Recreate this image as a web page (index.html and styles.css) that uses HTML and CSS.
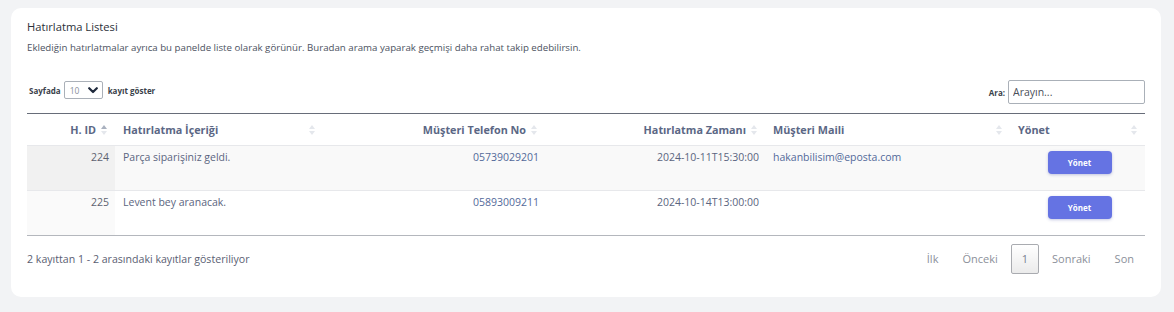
FILE: index.html
```html
<!DOCTYPE html>
<html lang="tr">
<head>
<meta charset="utf-8">
<link rel="stylesheet" href="styles.css">
</head>
<body>
<div class="page">
  <div class="card">
    <h1 class="title">Hatırlatma Listesi</h1>
    <p class="desc">Eklediğin hatırlatmalar ayrıca bu panelde liste olarak görünür. Buradan arama yaparak geçmişi daha rahat takip edebilirsin.</p>
    <div class="controls">
      <div class="length">
        <span class="lbl">Sayfada</span>
        <span class="select"><span class="sel-val">10</span><svg class="chev" width="10" height="7" viewBox="0 0 10 7"><path d="M1.2 1.2 L5 5 L8.8 1.2" fill="none" stroke="#1f2a3d" stroke-width="2.2" stroke-linecap="round" stroke-linejoin="round"/></svg></span>
        <span class="lbl">kayıt göster</span>
      </div>
      <div class="search">
        <span class="lbl">Ara:</span>
        <input class="search-in" type="text" placeholder="Arayın...">
      </div>
    </div>
    <table class="tbl">
      <colgroup>
        <col class="c1"><col class="c2"><col class="c3"><col class="c4"><col class="c5"><col class="c6">
      </colgroup>
      <thead>
        <tr>
          <th><div class="th-in right"><span>H. ID</span><svg class="sort" width="6" height="10" viewBox="0 0 6 10"><path d="M3 0 L6 4 L0 4 Z" fill="#a9b1bf"/><path d="M3 10 L6 6 L0 6 Z" fill="#e4e7ec"/></svg></div></th>
          <th><div class="th-in spread"><span>Hatırlatma İçeriği</span><svg class="sort" width="6" height="10" viewBox="0 0 6 10"><path d="M3 0 L6 4 L0 4 Z" fill="#e4e7ec"/><path d="M3 10 L6 6 L0 6 Z" fill="#e4e7ec"/></svg></div></th>
          <th><div class="th-in right"><span>Müşteri Telefon No</span><svg class="sort" width="6" height="10" viewBox="0 0 6 10"><path d="M3 0 L6 4 L0 4 Z" fill="#e4e7ec"/><path d="M3 10 L6 6 L0 6 Z" fill="#e4e7ec"/></svg></div></th>
          <th><div class="th-in right"><span>Hatırlatma Zamanı</span><svg class="sort" width="6" height="10" viewBox="0 0 6 10"><path d="M3 0 L6 4 L0 4 Z" fill="#e4e7ec"/><path d="M3 10 L6 6 L0 6 Z" fill="#e4e7ec"/></svg></div></th>
          <th><div class="th-in spread"><span>Müşteri Maili</span><svg class="sort" width="6" height="10" viewBox="0 0 6 10"><path d="M3 0 L6 4 L0 4 Z" fill="#e4e7ec"/><path d="M3 10 L6 6 L0 6 Z" fill="#e4e7ec"/></svg></div></th>
          <th><div class="th-in spread"><span>Yönet</span><svg class="sort" width="6" height="10" viewBox="0 0 6 10"><path d="M3 0 L6 4 L0 4 Z" fill="#e4e7ec"/><path d="M3 10 L6 6 L0 6 Z" fill="#e4e7ec"/></svg></div></th>
        </tr>
      </thead>
      <tbody>
        <tr class="odd">
          <td class="id sorted">224</td>
          <td class="txt">Parça siparişiniz geldi.</td>
          <td class="num link">05739029201</td>
          <td class="num">2024-10-11T15:30:00</td>
          <td class="txt link">hakanbilisim@eposta.com</td>
          <td class="act"><button class="btn">Yönet</button></td>
        </tr>
        <tr class="even">
          <td class="id sorted">225</td>
          <td class="txt">Levent bey aranacak.</td>
          <td class="num link">05893009211</td>
          <td class="num">2024-10-14T13:00:00</td>
          <td class="txt link"></td>
          <td class="act"><button class="btn">Yönet</button></td>
        </tr>
      </tbody>
    </table>
    <div class="footer">
      <div class="info">2 kayıttan 1 - 2 arasındaki kayıtlar gösteriliyor</div>
      <div class="pager">
        <span class="pg">İlk</span>
        <span class="pg">Önceki</span>
        <span class="pg current">1</span>
        <span class="pg">Sonraki</span>
        <span class="pg">Son</span>
      </div>
    </div>
  </div>
</div>
</body>
</html>
```

FILE: styles.css
```css
* { box-sizing: border-box; }
html, body { margin: 0; padding: 0; }
body {
  background: #f2f3f5;
  font-family: "Open Sans", "Noto Sans", sans-serif;
  width: 1174px;
  height: 312px;
  overflow: hidden;
}
.page { padding: 8px 13px 0 11px; }
.card {
  background: #ffffff;
  border-radius: 10px;
  padding: 11px 16px 22px 16px;
  height: 289px;
}
.title {
  margin: 0;
  font-size: 11.2px;
  line-height: 16px;
  font-weight: 400;
  color: #2b2f38;
}
.desc {
  margin: 6px 0 0 0;
  font-size: 9.7px;
  line-height: 14px;
  color: #4c5261;
}
.controls {
  margin-top: 25px;
  display: flex;
  justify-content: space-between;
  align-items: flex-start;
  height: 24px;
}
.length { display: flex; align-items: center; gap: 3px; padding-left: 2px; margin-top: 1px; }
.lbl { font-size: 8px; font-weight: 700; color: #3a3f4a; }
.select {
  display: flex;
  align-items: center;
  justify-content: space-between;
  width: 39px;
  height: 18px;
  border: 1px solid #aab0b8;
  border-radius: 2px;
  padding: 0 4px 0 5px;
  margin-right: 2px;
}
.sel-val { font-size: 8.5px; color: #8a909c; }
.search { display: flex; align-items: center; gap: 3px; }
.search-in {
  width: 137px;
  height: 24px;
  border: 1px solid #aab0b8;
  border-radius: 2px;
  padding: 0 4px;
  font-family: "Open Sans", sans-serif;
  font-size: 10.5px;
  color: #444;
  outline: none;
}
.search-in::placeholder { color: #4a4f59; }
.tbl {
  margin-top: 9px;
  width: 1118px;
  border-collapse: collapse;
  table-layout: fixed;
  border-top: 1px solid #676d79;
  border-bottom: 1px solid #b4b7bd;
}
.c1 { width: 88px; }
.c2 { width: 208px; }
.c3 { width: 222px; }
.c4 { width: 220px; }
.c5 { width: 245px; }
.c6 { width: 135px; }
.tbl th {
  height: 32px;
  padding: 0 8px 0 8px;
  font-size: 10.8px;
  font-weight: 700;
  color: #5b6785;
  border-bottom: 1px solid #e7e8eb;
  text-align: left;
}
.th-in { display: flex; align-items: center; }
.th-in.right { justify-content: flex-end; gap: 5px; }
.th-in.spread { justify-content: space-between; }
.sort { display: block; flex: none; }
.tbl td {
  height: 45px;
  vertical-align: top;
  padding: 4px 6px 0 8px;
  font-size: 10.5px;
  line-height: 15px;
  color: #5b6580;
}
.tbl tbody tr.odd { background: #f9f9f9; }
.tbl tbody tr.odd td { border-bottom: 1px solid #e7e8eb; }
.tbl tbody tr.odd td.sorted { background: #f1f1f1; }
.tbl tbody tr.even td.sorted { background: #fafafa; }
.tbl td.id { text-align: right; color: #5d6270; }
.tbl td.num { text-align: right; }
.tbl td.link { color: #53699a; }
.tbl td.act { text-align: center; padding: 5px 0 0 4px; }
.btn {
  width: 64px;
  height: 23px;
  border: none;
  border-radius: 4px;
  background: #6573e3;
  color: #ffffff;
  font-family: "Open Sans", sans-serif;
  font-size: 8px;
  font-weight: 700;
  box-shadow: 0 1px 3px rgba(60, 70, 160, 0.3);
}
.footer {
  display: flex;
  justify-content: space-between;
  align-items: center;
  margin-top: 8px;
}
.info { font-size: 10.6px; color: #5a6072; }
.pager { display: flex; align-items: center; gap: 2px; }
.pg {
  font-size: 11px;
  color: #8c909a;
  height: 30px;
  line-height: 28px;
  padding: 0 10px;
  border: 1px solid transparent;
}
.pg.current {
  border: 1px solid #a9abb0;
  border-radius: 2px;
  background: linear-gradient(#ffffff, #ebebeb);
  color: #7a8090;
}
```
